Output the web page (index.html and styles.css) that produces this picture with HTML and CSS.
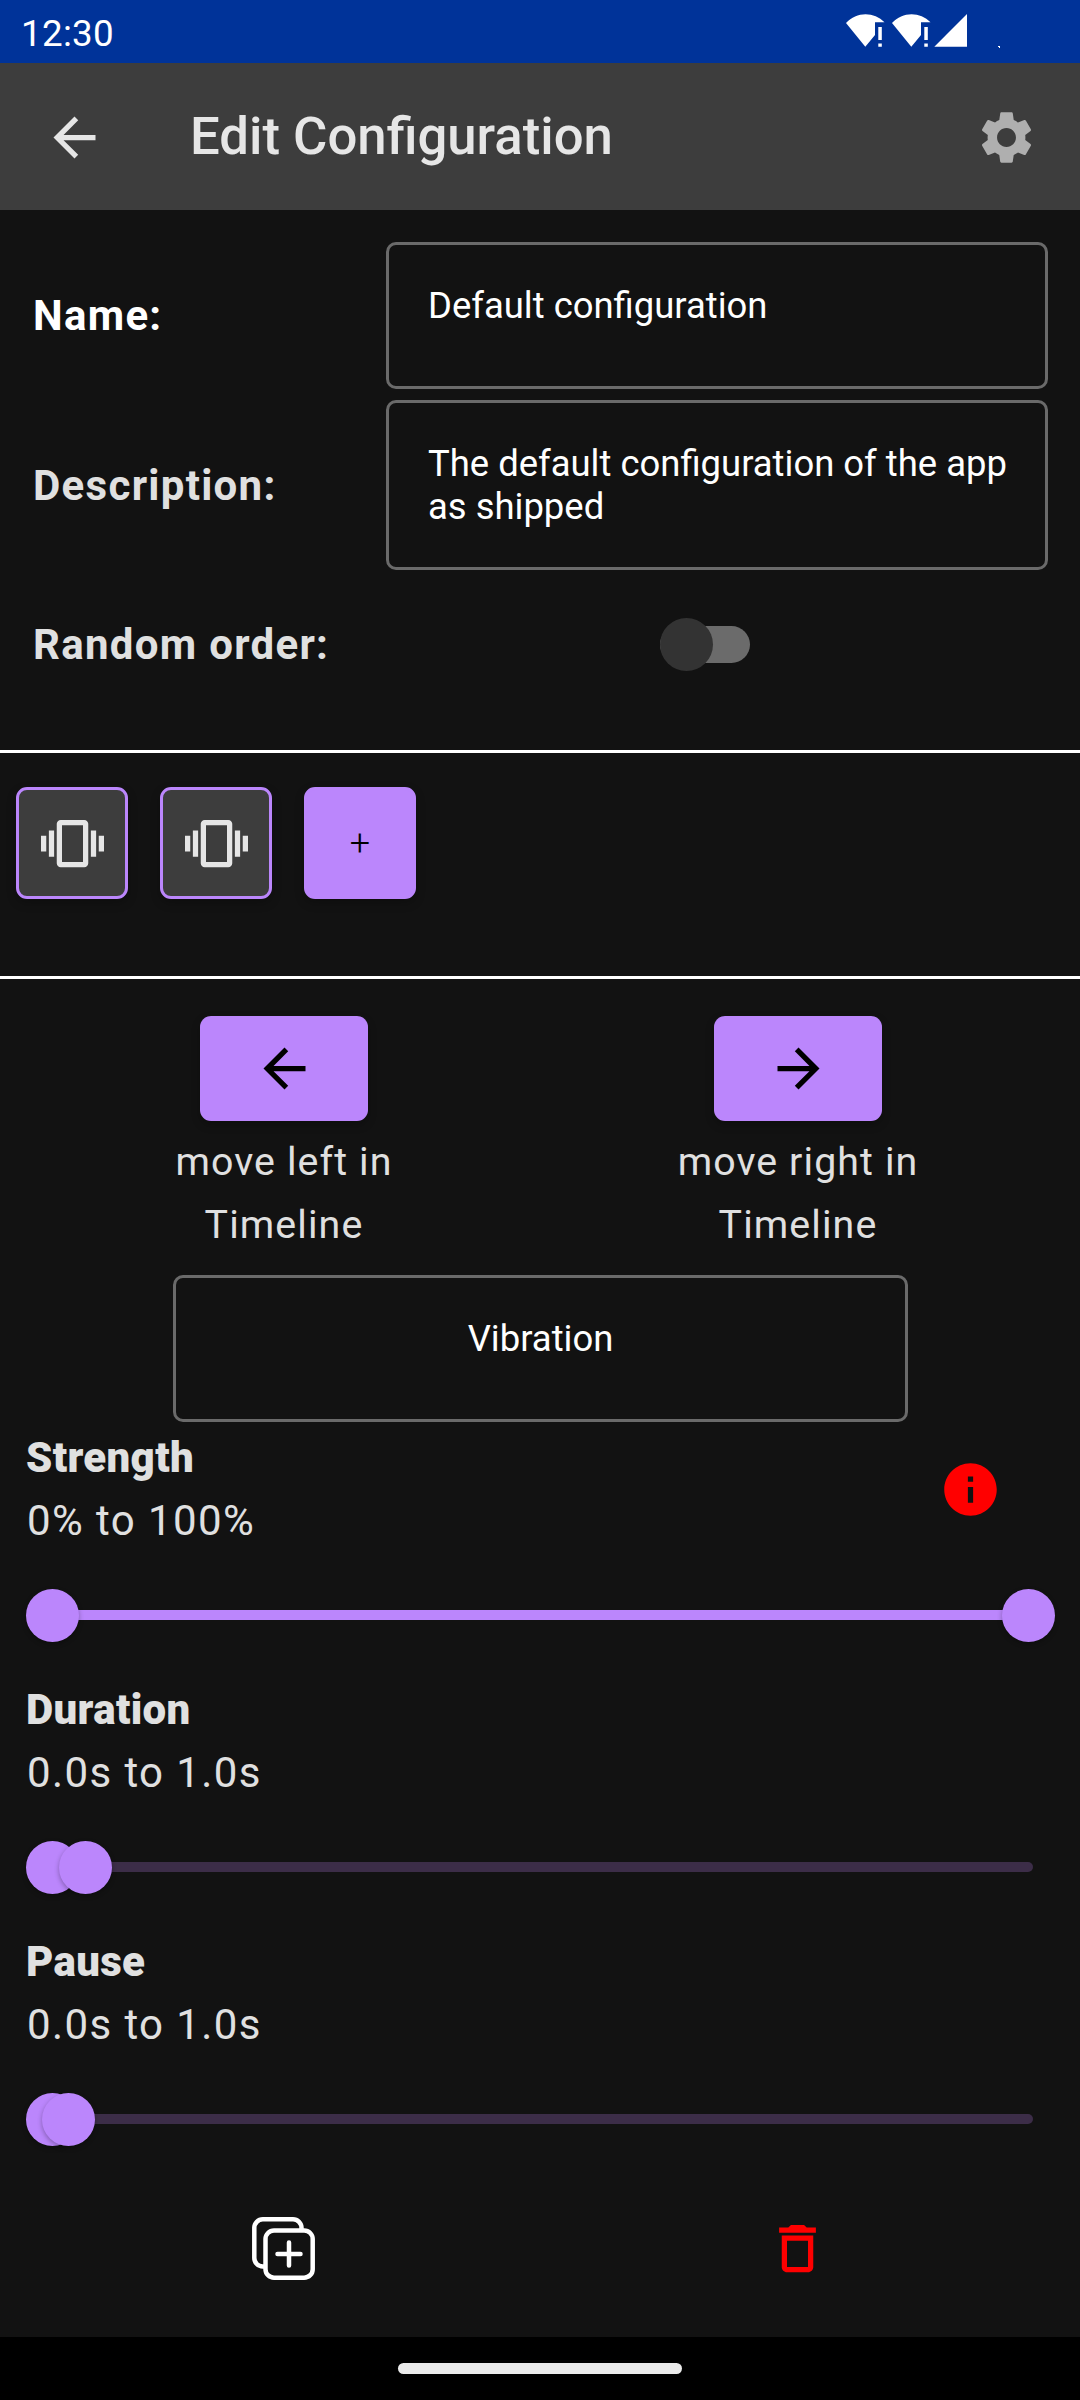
FILE: index.html
```html
<!DOCTYPE html>
<html lang="en">
<head>
<meta charset="utf-8">
<title>Edit Configuration</title>
<link rel="stylesheet" href="styles.css">
</head>
<body>
<div class="screen">
  <div class="status-bar">
    <span class="clock">12:30</span>
    <svg class="status-icons" width="160" height="40" viewBox="0 0 160 40" fill="#fff">
      <path d="M0 9C10.500-2.700 28-2.700 38.500 8.300H29V21L19.300 32.700Z"/>
      <path d="M32.300 13h3.500v13h-3.500zM32.300 29.500h3.500v3.200h-3.500z"/>
      <path d="M46 9C56.500-2.700 74-2.700 84.500 8.300H75V21L65.300 32.700Z"/>
      <path d="M78.300 13h3.500v13h-3.500zM78.300 29.500h3.500v3.200h-3.500z"/>
      <path d="M88.300 32.700H121V0Z"/>
      <path d="M152 32h2v2h-1v-1h-1z"/>
    </svg>
  </div>

  <header class="app-bar">
    <svg class="icon" viewBox="0 0 24 24" fill="#e6e6e6"><path d="M20 11H7.830l5.590-5.590L12 4l-8 8 8 8 1.410-1.410L7.830 13H20z"/></svg>
    <h1 class="title">Edit Configuration</h1>
    <svg class="icon" viewBox="0 0 24 24" fill="#afafaf"><path d="M19.140,12.940c0.040-0.300,0.060-0.610,0.060-0.940c0-0.320-0.020-0.640-0.070-0.940l2.030-1.580c0.180-0.140,0.230-0.410,0.120-0.610l-1.920-3.320c-0.120-0.220-0.370-0.290-0.590-0.220l-2.390,0.960c-0.500-0.380-1.030-0.700-1.620-0.940L14.400,2.810c-0.040-0.240-0.240-0.410-0.480-0.410h-3.840c-0.240,0-0.430,0.170-0.470,0.410L9.250,5.350C8.660,5.590,8.120,5.920,7.630,6.290L5.240,5.330c-0.220-0.080-0.470,0-0.590,0.220L2.740,8.870C2.620,9.080,2.660,9.340,2.860,9.480l2.030,1.580C4.840,11.360,4.800,11.690,4.800,12s0.020,0.640,0.070,0.940l-2.030,1.580c-0.180,0.140-0.230,0.410-0.120,0.610l1.920,3.320c0.120,0.220,0.370,0.290,0.590,0.220l2.390-0.960c0.500,0.380,1.030,0.700,1.620,0.940l0.360,2.540c0.050,0.240,0.240,0.410,0.480,0.410h3.840c0.240,0,0.440-0.170,0.470-0.410l0.360-2.540c0.590-0.240,1.130-0.560,1.620-0.940l2.390,0.960c0.220,0.080,0.470,0,0.590-0.220l1.920-3.320c0.120-0.220,0.070-0.470-0.120-0.610L19.140,12.940zM12,15.600c-1.980,0-3.600-1.620-3.600-3.600s1.620-3.600,3.600-3.600s3.600,1.620,3.600,3.600S13.980,15.600,12,15.600z"/></svg>
  </header>

  <section class="form">
    <div class="form-row">
      <span class="label label-strong">Name:</span>
      <div class="field">Default configuration</div>
    </div>
    <div class="form-row">
      <span class="label">Description:</span>
      <div class="field">The default configuration of the app as shipped</div>
    </div>
    <div class="form-row form-row-switch">
      <span class="label">Random order:</span>
      <div class="switch"><div class="switch-thumb"></div></div>
    </div>
  </section>

  <section class="timeline">
    <div class="tile"><svg class="icon" viewBox="0 0 24 24" fill="#e6e6e6"><path d="M0 15h2V9H0v6zm3 2h2V7H3v10zm19-8v6h2V9h-2zm-3 8h2V7h-2v10zM16.500 3h-9C6.670 3 6 3.670 6 4.500v15c0 .830.670 1.500 1.500 1.500h9c.830 0 1.500-.670 1.500-1.500v-15c0-.830-.670-1.500-1.500-1.500zM16 19H8V5h8v14z"/></svg></div>
    <div class="tile"><svg class="icon" viewBox="0 0 24 24" fill="#e6e6e6"><path d="M0 15h2V9H0v6zm3 2h2V7H3v10zm19-8v6h2V9h-2zm-3 8h2V7h-2v10zM16.500 3h-9C6.670 3 6 3.670 6 4.500v15c0 .830.670 1.500 1.500 1.500h9c.830 0 1.500-.670 1.500-1.500v-15c0-.830-.670-1.500-1.500-1.500zM16 19H8V5h8v14z"/></svg></div>
    <div class="tile tile-add">+</div>
  </section>

  <section class="editor">
    <div class="columns moves">
      <div class="move">
        <div class="move-button"><svg class="icon" viewBox="0 0 24 24"><path d="M20 11H7.830l5.590-5.590L12 4l-8 8 8 8 1.410-1.410L7.830 13H20z"/></svg></div>
        <div class="move-text">move left in<br>Timeline</div>
      </div>
      <div class="move">
        <div class="move-button"><svg class="icon" viewBox="0 0 24 24"><path d="M12 4l-1.410 1.410L16.170 11H4v2h12.170l-5.580 5.590L12 20l8-8z"/></svg></div>
        <div class="move-text">move right in<br>Timeline</div>
      </div>
    </div>

    <div class="field type-field">Vibration</div>

    <div class="setting">
      <div class="setting-head">
        <div>
          <div class="setting-name">Strength</div>
          <div class="setting-value">0% to 100%</div>
        </div>
        <svg class="icon" viewBox="0 0 24 24" fill="#f00"><path d="M12 2C6.480 2 2 6.480 2 12s4.480 10 10 10 10-4.480 10-10S17.520 2 12 2zm1 15h-2v-6h2v6zm0-8h-2V7h2v2z"/></svg>
      </div>
      <div class="slider">
        <div class="track track-full"></div>
        <div class="thumb" style="left: 0%"></div>
        <div class="thumb" style="left: 100%"></div>
      </div>
    </div>

    <div class="setting">
      <div class="setting-head">
        <div>
          <div class="setting-name">Duration</div>
          <div class="setting-value">0.0s to 1.0s</div>
        </div>
      </div>
      <div class="slider">
        <div class="track"></div>
        <div class="thumb" style="left: 0%"></div>
        <div class="thumb" style="left: 3.400%"></div>
      </div>
    </div>

    <div class="setting">
      <div class="setting-head">
        <div>
          <div class="setting-name">Pause</div>
          <div class="setting-value">0.0s to 1.0s</div>
        </div>
      </div>
      <div class="slider">
        <div class="track"></div>
        <div class="thumb" style="left: 0%"></div>
        <div class="thumb" style="left: 1.650%"></div>
      </div>
    </div>

    <div class="columns actions">
      <svg class="icon" viewBox="0 0 63 63" fill="none" stroke="#fff" stroke-width="4.500" stroke-linecap="round">
        <rect x="13.500" y="13.500" width="47.200" height="47.200" rx="8.500"/>
        <path d="M49.500 12.500V10.800a8.500 8.500 0 0 0-8.500-8.500H10.800a8.500 8.500 0 0 0-8.500 8.500V41a8.500 8.500 0 0 0 8.500 8.500h1.500" stroke-linecap="butt"/>
        <path d="M37 25.500v23M25.500 37h23"/>
      </svg>
      <svg class="icon" viewBox="0 0 24 24" fill="#f00"><path d="M6 19c0 1.100.900 2 2 2h8c1.100 0 2-.900 2-2V7H6v12zM8 9h8v10H8V9zm7.500-5l-1-1h-5l-1 1H5v2h14V4h-3.500z"/></svg>
    </div>
  </section>

  <div class="nav-bar"><div class="nav-handle"></div></div>
</div>
</body>
</html>
```
FILE: styles.css
```css
* {
  box-sizing: border-box;
}

body {
  margin: 0;
  background: #121212;
  font-family: Roboto, "Liberation Sans", sans-serif;
  color: #e0e0e0;
}

.screen {
  width: 1080px;
  height: 2400px;
  display: flex;
  flex-direction: column;
  overflow: hidden;
}

.icon {
  display: block;
  flex: none;
  width: 63px;
  height: 63px;
}

/* System status bar */
.status-bar {
  flex: none;
  height: 63px;
  padding: 0 74px 0 21px;
  display: flex;
  justify-content: space-between;
  background: #003399;
  color: #fff;
}

.clock {
  font-size: 36.75px;
  line-height: 67px;
  letter-spacing: 0.3px;
}

.status-icons {
  margin-top: 14px;
}

/* App bar */
.app-bar {
  flex: none;
  height: 147px;
  padding: 1px 42px 0 43px;
  display: flex;
  align-items: center;
  background: #3d3d3d;
}

.title {
  flex: 1;
  margin: 0 0 3px 84px;
  font-size: 52.7px;
  font-weight: 500;
  line-height: 62px;
  color: #e6e6e6;
}

/* Name, description, order */
.form {
  flex: none;
  height: 540px;
  padding: 32px 32px 0;
  display: flex;
  flex-direction: column;
  gap: 11px;
}

.form-row {
  display: grid;
  grid-template-columns: 354px 662px;
  align-items: center;
}

.form-row-switch {
  height: 126px;
}

.label {
  padding-left: 1px;
  font-size: 42px;
  font-weight: 700;
  letter-spacing: 1.3px;
}

.label-strong {
  color: #fff;
}

.field {
  min-height: 147px;
  padding: 39px 30px 39px 39px;
  border: 3px solid #6a6a6a;
  border-radius: 10px;
  font-size: 36.45px;
  line-height: 43px;
  color: #fff;
}

.switch {
  width: 90px;
  height: 37px;
  margin-left: 274px;
  display: flex;
  align-items: center;
  border-radius: 19px;
  background: #6b6b6b;
}

.switch-thumb {
  flex: none;
  width: 53px;
  height: 53px;
  border-radius: 50%;
  background: #333;
}

/* Timeline strip */
.timeline {
  flex: none;
  height: 229px;
  padding: 34px 16px 0;
  display: flex;
  gap: 32px;
  border-top: 3px solid #fff;
  border-bottom: 3px solid #fff;
}

.tile {
  width: 112px;
  height: 112px;
  padding: 1px 0 0 1px;
  display: flex;
  align-items: center;
  justify-content: center;
  border: 3px solid #bb86fc;
  border-radius: 11px;
  background: #3d3d3d;
  box-shadow: 0 4px 10px rgba(0, 0, 0, 0.25);
}

.tile-add {
  padding: 0;
  background: #bb86fc;
  font-size: 36px;
  font-weight: 300;
  color: #000;
}

/* Selected entry editor */
.editor {
  flex: 1;
  padding: 37px 26px 0;
}

.columns {
  display: grid;
  grid-template-columns: 514px 514px;
  justify-items: center;
}

.moves {
  margin-left: 1px;
}

.move {
  display: flex;
  flex-direction: column;
  align-items: center;
  gap: 10px;
}

.move-button {
  width: 168px;
  height: 105px;
  padding-left: 1px;
  display: flex;
  align-items: center;
  justify-content: center;
  border-radius: 11px;
  background: #bb86fc;
  box-shadow: 0 4px 8px rgba(0, 0, 0, 0.25);
}

.move-text {
  font-size: 39.3px;
  line-height: 63px;
  letter-spacing: 1.1px;
  text-align: center;
}

.type-field {
  width: 735px;
  margin: 18px auto 4px 147px;
  padding: 39px;
  text-align: center;
}

.setting-head {
  display: flex;
  align-items: center;
  justify-content: space-between;
  padding-right: 52px;
}

.setting-name {
  font-size: 42px;
  font-weight: 900;
  line-height: 63px;
  letter-spacing: 0.35px;
}

.setting-value {
  padding-left: 1px;
  font-size: 42px;
  line-height: 63px;
  letter-spacing: 1.4px;
}

.slider {
  position: relative;
  width: 975.5px;
  height: 126px;
  display: flex;
  align-items: center;
}

.track {
  flex: none;
  width: 986px;
  height: 10.5px;
  margin-left: 21px;
  border-radius: 5px;
  background: #3c2d48;
}

.track-full {
  background: #bb86fc;
}

.thumb {
  position: absolute;
  top: 37px;
  width: 53px;
  height: 53px;
  border-radius: 50%;
  background: #bb86fc;
  box-shadow: 0 2px 5px rgba(0, 0, 0, 0.3);
}

.actions {
  padding-top: 35px;
}

/* Gesture navigation */
.nav-bar {
  flex: none;
  height: 63px;
  display: flex;
  align-items: center;
  justify-content: center;
  background: #000;
}

.nav-handle {
  width: 284px;
  height: 11px;
  border-radius: 6px;
  background: #ebebeb;
}
```
